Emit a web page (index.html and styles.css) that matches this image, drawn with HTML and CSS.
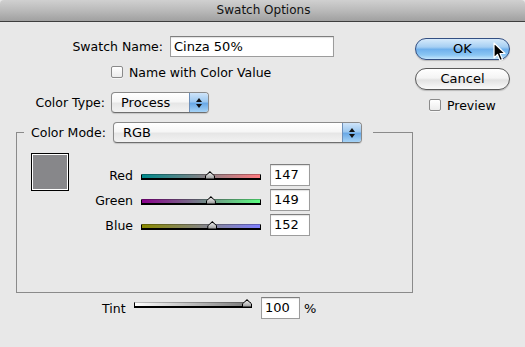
FILE: index.html
```
<!DOCTYPE html>
<html lang="en">
<head>
<meta charset="UTF-8">
<title>Swatch Options</title>
<link rel="stylesheet" href="styles.css">
</head>
<body>
<div class="window">

  <div class="titlebar">Swatch Options</div>

  <div class="content">
    <div class="main">

      <div class="row row-name">
        <label class="lbl lbl-name">Swatch Name:</label>
        <div class="field field-name">Cinza 50%</div>
      </div>

      <div class="row row-check">
        <span class="checkbox"></span>
        <span>Name with Color Value</span>
      </div>

      <div class="row row-type">
        <label class="lbl lbl-type">Color Type:</label>
        <div class="popup popup-type">
          <span class="popup-text">Process</span>
          <span class="popup-cap"><i class="up"></i><i class="down"></i></span>
        </div>
      </div>

      <fieldset class="group">
        <legend class="group-legend">
          <span class="lbl lbl-mode">Color Mode:</span>
          <div class="popup popup-mode">
            <span class="popup-text">RGB</span>
            <span class="popup-cap"><i class="up"></i><i class="down"></i></span>
          </div>
        </legend>

        <div class="group-body">
          <div class="swatch"></div>
          <div class="channels">
            <div class="channel">
              <span class="lbl ch-lbl">Red</span>
              <div class="slider slider-red"><span class="thumb" style="left: 57.6%"></span></div>
              <div class="field field-num">147</div>
            </div>
            <div class="channel">
              <span class="lbl ch-lbl">Green</span>
              <div class="slider slider-green"><span class="thumb" style="left: 58.4%"></span></div>
              <div class="field field-num">149</div>
            </div>
            <div class="channel">
              <span class="lbl ch-lbl">Blue</span>
              <div class="slider slider-blue"><span class="thumb" style="left: 59.6%"></span></div>
              <div class="field field-num">152</div>
            </div>
          </div>
        </div>
      </fieldset>

      <div class="row row-tint">
        <span class="lbl lbl-tint">Tint</span>
        <div class="slider slider-tint"><span class="thumb" style="left: 100%"></span></div>
        <div class="field field-tint">100</div>
        <span class="pct">%</span>
      </div>

    </div>

    <div class="side">
      <div class="btn btn-ok">OK</div>
      <div class="btn btn-cancel">Cancel</div>
      <div class="row row-preview">
        <span class="checkbox"></span>
        <span>Preview</span>
      </div>
    </div>
  </div>

  <svg class="cursor" width="13" height="20" viewBox="0 0 13 20">
    <path d="M1 1 L1 16 L4.5 12.5 L7 18.5 L9.5 17.5 L7 11.5 L12 11.5 Z" fill="#000" stroke="#fff" stroke-width="1.2" stroke-linejoin="round"/>
  </svg>

</div>
</body>
</html>
```

FILE: styles.css
```
:root {
  --bg: #e8e8e8;
  --text: #000;
  --line: #8a8a8a;
  --field-border: #9c9c9c;
}

* { margin: 0; padding: 0; box-sizing: border-box; }

body {
  background: var(--bg);
  color: var(--text);
  font-family: 'DejaVu Sans', 'Noto Sans', sans-serif;
  font-size: 12.5px;
  width: 525px;
  height: 347px;
  overflow: hidden;
}

.window {
  position: relative;
  height: 347px;
}

/* Title bar */
.titlebar {
  height: 22px;
  line-height: 21px;
  text-align: center;
  font-size: 12px;
  color: #111;
  background: linear-gradient(#d0d0d0 0%, #bababa 50%, #a0a0a0 100%);
  border-bottom: 1px solid #3e3e3e;
  border-radius: 4px 4px 0 0;
  padding-left: 2px;
}

.content {
  display: flex;
}

.main {
  width: 415px;
  flex-shrink: 0;
}

.row {
  display: flex;
  align-items: center;
}

.lbl { white-space: nowrap; }

/* Text fields */
.field {
  background: #fff;
  border: 1px solid var(--field-border);
  border-top-color: #7e7e7e;
  box-shadow: inset 0 1px 1px rgba(0,0,0,0.12);
  height: 22px;
  line-height: 20px;
  padding-left: 3px;
  font-size: 13px;
}

/* Swatch name */
.row-name { padding-top: 14px; }
.lbl-name {
  width: 163px;
  text-align: right;
}
.field-name {
  width: 164px;
  margin-left: 7px;
  height: 21px;
}

/* Checkboxes */
.checkbox {
  width: 12px;
  height: 12px;
  border: 1px solid #8a8a8a;
  border-radius: 2px;
  background: linear-gradient(#fff, #ececec);
  box-shadow: 0 1px 0 rgba(255,255,255,0.6);
  flex-shrink: 0;
}

.row-check {
  margin-top: 8px;
  padding-left: 111px;
  height: 14px;
  gap: 6px;
}

/* Popups */
.row-type { margin-top: 13px; }
.lbl-type {
  width: 105px;
  text-align: right;
}

.popup {
  height: 21px;
  border: 1px solid #8a8a8a;
  border-bottom-color: #6e6e6e;
  border-radius: 4px;
  background: linear-gradient(#ffffff 0%, #f6f6f6 45%, #e6e6e6 55%, #f2f2f2 100%);
  box-shadow: 0 1px 1px rgba(0,0,0,0.15);
  display: flex;
  overflow: hidden;
}
.popup-text {
  flex: 1;
  line-height: 19px;
  padding-left: 9px;
  font-size: 13px;
}
.popup-cap {
  width: 19px;
  border-left: 1px solid #6d8fb9;
  background: linear-gradient(#cfe4f9 0%, #9cc8f0 45%, #6aa9e6 55%, #a6d3f6 100%);
  display: flex;
  flex-direction: column;
  align-items: center;
  justify-content: center;
  gap: 2px;
}
.popup-cap i {
  width: 0;
  height: 0;
  border-left: 3px solid transparent;
  border-right: 3px solid transparent;
}
.popup-cap .up { border-bottom: 4px solid #111; }
.popup-cap .down { border-top: 4px solid #111; }

.popup-type {
  width: 98px;
  margin-left: 6px;
}

/* Color mode group */
.group {
  margin: 9px 0 0 16px;
  width: 397px;
  border: 1px solid var(--line);
  padding: 0 0 56px 7px;
}

.group-legend {
  display: flex;
  align-items: center;
  padding: 0 11px 0 7px;
}
.lbl-mode { width: 82px; }
.popup-mode { width: 249px; }

.group-body {
  display: flex;
  align-items: flex-start;
  padding: 10px 0 0 7px;
}

.swatch {
  width: 38px;
  height: 38px;
  border: 1px solid #000;
  box-shadow: inset 0 0 0 1px #fff;
  background: #87878a;
  flex-shrink: 0;
}

.channels {
  margin-top: 11px;
  display: flex;
  flex-direction: column;
  gap: 3px;
}

.channel {
  display: flex;
  align-items: center;
  height: 22px;
}

.ch-lbl {
  width: 64px;
  text-align: right;
}

/* Sliders */
.slider {
  position: relative;
  height: 6px;
  border-left: 1px solid #000;
  border-right: 1px solid #000;
  border-bottom: 2px solid #000;
  border-top: 1px solid rgba(0,0,0,0.25);
}
.channel .slider {
  width: 120px;
  margin: 4px 9px 0 8px;
}
.slider-red { background: linear-gradient(90deg, #008a8c, #ff7a80); }
.slider-green { background: linear-gradient(90deg, #8a008c, #5cff82); }
.slider-blue { background: linear-gradient(90deg, #8a8a00, #8080ff); }
.slider-tint { background: linear-gradient(90deg, #fff, #777); }

.thumb {
  position: absolute;
  bottom: -2px;
  width: 10px;
  height: 9px;
  margin-left: -5px;
  background: #000;
  clip-path: polygon(50% 0, 100% 55%, 100% 100%, 0 100%, 0 55%);
}
.thumb::after {
  content: '';
  position: absolute;
  left: 1px;
  top: 1.5px;
  width: 8px;
  height: 6px;
  background: linear-gradient(#e6e6e6, #9a9a9a);
  clip-path: polygon(50% 0, 100% 55%, 100% 100%, 0 100%, 0 55%);
}

.field-num { width: 40px; }

/* Tint */
.row-tint {
  margin-top: 4px;
  padding-left: 102px;
}
.lbl-tint { width: 32px; }
.slider-tint {
  width: 117px;
  margin-bottom: 6px;
  border-right: none;
}
.slider-tint .thumb { margin-left: -9px; }
.field-tint {
  width: 39px;
  margin-left: 10px;
}
.pct {
  margin-left: 4px;
  font-size: 13px;
}

/* Buttons */
.side {
  padding-top: 16px;
  width: 95px;
}

.btn {
  height: 22px;
  line-height: 20px;
  text-align: center;
  font-size: 13px;
  border-radius: 11px;
  border: 1px solid #5a5a5a;
  background: linear-gradient(#ffffff 0%, #f4f4f4 45%, #e2e2e2 55%, #fafafa 100%);
  box-shadow: 0 1px 1px rgba(0,0,0,0.2);
}
.btn-ok {
  border-color: #334f82;
  background: linear-gradient(#d6eafb 0%, #a6cff3 40%, #6fb0ec 52%, #8bc6f3 80%, #c5e6fd 100%);
}
.btn-cancel { margin-top: 8px; }

.row-preview {
  margin-top: 8px;
  padding-left: 14px;
  gap: 6px;
  height: 14px;
}

/* Mouse pointer over the OK button */
.cursor {
  position: absolute;
  left: 493px;
  top: 42px;
}
```
